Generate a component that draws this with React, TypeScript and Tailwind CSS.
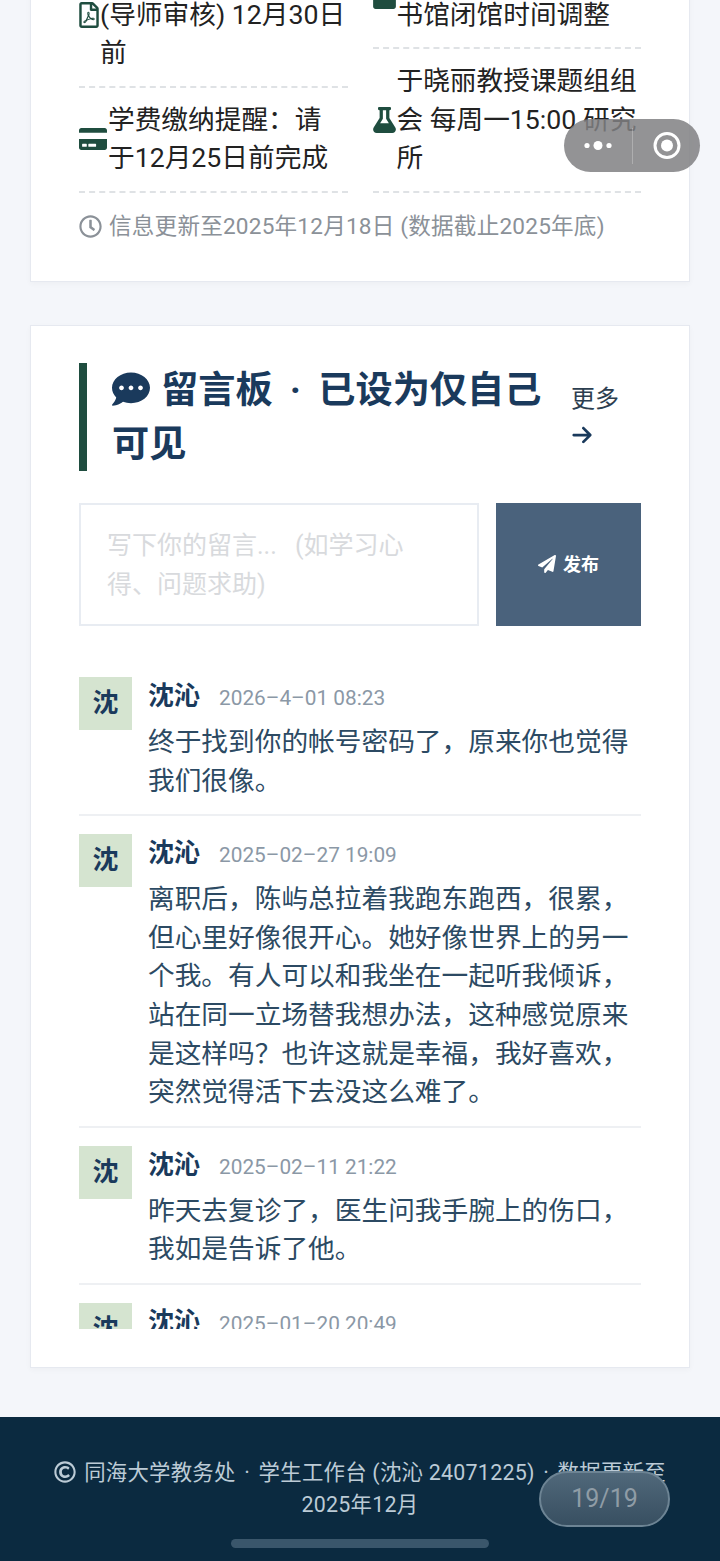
import { FaCalendar, FaCommentDots, FaCreditCard, FaFlask, FaPaperPlane, FaRegClock, FaRegCopyright, FaRegFilePdf } from "react-icons/fa";
import { FaArrowRight } from "react-icons/fa6";

const notices = {
  left: [
    { icon: <FaRegFilePdf className="h-[26px] w-[20px]" />, text: "开题报告提交截止 (导师审核) 12月30日前" },
    { icon: <FaCreditCard className="h-[26px] w-[28px]" />, text: "学费缴纳提醒：请于12月25日前完成" },
  ],
  right: [
    { icon: <FaCalendar className="h-[26px] w-[23px]" />, text: "元旦假期期间学校图书馆闭馆时间调整" },
    { icon: <FaFlask className="h-[26px] w-[23px]" />, text: "于晓丽教授课题组组会 每周一15:00 研究所" },
  ],
};

const messages = [
  { time: "2026–4–01 08:23", text: "终于找到你的帐号密码了，原来你也觉得我们很像。" },
  {
    time: "2025–02–27 19:09",
    text: "离职后，陈屿总拉着我跑东跑西，很累，但心里好像很开心。她好像世界上的另一个我。有人可以和我坐在一起听我倾诉，站在同一立场替我想办法，这种感觉原来是这样吗？也许这就是幸福，我好喜欢，突然觉得活下去没这么难了。",
  },
  { time: "2025–02–11 21:22", text: "昨天去复诊了，医生问我手腕上的伤口，我如是告诉了他。" },
  { time: "2025–01–20 20:49", text: "今天也是普通的一天。" },
];

function NoticeItem({ icon, text }: { icon: React.ReactNode; text: string }) {
  return (
    <div className="flex items-center gap-[1px] border-b-2 border-dashed border-[#dfe2e5] py-[13px]">
      <span className="shrink-0 text-[#1f4d3f]">{icon}</span>
      <span>{text}</span>
    </div>
  );
}

function Message({ time, text }: { time: string; text: string }) {
  return (
    <div className="flex gap-[17px] border-b-2 border-[#eef0f3] pb-[14px] pt-[18px]">
      <div className="flex h-[53px] w-[53px] shrink-0 items-center justify-center bg-[#d5e4d0] text-[26px] font-bold text-[#1a3a5c]">
        沈
      </div>
      <div className="-ml-px min-w-0 flex-1">
        <div className="mb-[8px] flex items-center gap-[19px] leading-[38px]">
          <span className="text-[26px] font-bold text-[#1a3a5c]">沈沁</span>
          <span className="translate-y-[2px] text-[20.8px] text-[#8b98a6]">{time}</span>
        </div>
        <p className="text-[26.7px] leading-[38.6px] text-[#2c4a63]">{text}</p>
      </div>
    </div>
  );
}

export default function App() {
  return (
    <div className="relative h-[1561px] w-[720px] overflow-hidden bg-[#f4f6fa] font-['Roboto','Noto_Sans_CJK_SC',sans-serif]">
      <section className="mx-[30px] -mt-[104px] border border-[#e6e9f0] bg-white px-[48px] pb-[38px] pt-[47px] shadow-[0_2px_6px_rgba(0,0,0,0.03)]">
        <div className="grid grid-cols-2 gap-x-[25px] text-[26.7px] leading-[38.6px] text-[#222]">
          <div className="flex flex-col">
            {notices.left.map((n) => (
              <NoticeItem key={n.text} {...n} />
            ))}
          </div>
          <div className="flex flex-col">
            {notices.right.map((n) => (
              <NoticeItem key={n.text} {...n} />
            ))}
          </div>
        </div>
        <div className="mt-[18px] flex items-center gap-[7px] text-[22.6px] leading-[32px] tracking-[0.2px] text-[#8b9198]">
          <FaRegClock className="shrink-0 text-[23px]" />
          <span>信息更新至2025年12月18日 (数据截止2025年底)</span>
        </div>
      </section>

      <section className="mx-[30px] mt-[43px] border border-[#e6e9f0] bg-white px-[48px] pb-[38px] pt-[37px] shadow-[0_2px_6px_rgba(0,0,0,0.03)]">
        <div className="mb-[32px] flex items-center justify-between gap-[28px]">
          <h2 className="flex-1 border-l-8 border-[#1f4d3f] pl-[25px] text-[37.2px] font-bold leading-[54px] text-[#1a3a5c]">
            <FaCommentDots className="mr-[11px] inline-block align-[-5px] text-[38px]" />
            留言板<span className="mx-[8px]"> · </span>已设为仅自己可见
          </h2>
          <a className="w-[70px] shrink-0 text-[24px] leading-[35px] text-[#2c3e50]">
            更多 <FaArrowRight className="inline-block align-[-4px] text-[22px] text-[#1a3a5c]" />
          </a>
        </div>

        <div className="flex gap-[17px]">
          <textarea
            className="h-[123px] flex-1 resize-none border-2 border-[#e8ecf2] pb-[20px] pl-[26px] pr-[60px] pt-[22px] text-[25px] leading-[38.6px] [word-spacing:12px] placeholder:text-[#d8dadd]"
            placeholder="写下你的留言... (如学习心得、问题求助)"
          />
          <button className="flex w-[145px] items-center justify-center gap-[7px] bg-[#4a627c] text-[18px] font-bold text-white">
            <FaPaperPlane className="text-[18px]" />
            发布
          </button>
        </div>

        <div className="mt-[33px] h-[670px] overflow-hidden">
          {messages.map((m) => (
            <Message key={m.time} {...m} />
          ))}
        </div>
      </section>

      <footer className="mt-[49px] h-[144px] bg-[#0b2a40] px-[40px] pt-[40px] text-center text-[21.4px] leading-[32px] tracking-[0.25px] text-[#bccbd6]">
        <FaRegCopyright className="mr-[8px] inline-block align-[-3px] text-[22px]" />
        同海大学教务处<span className="mx-[3px]"> · </span>学生工作台 (沈沁 24071225)<span className="mx-[3px]"> · </span>数据更新至2025年12月
      </footer>

      {/* capsule */}
      <div className="absolute left-[564px] top-[119px] flex h-[53px] w-[136px] items-center rounded-full bg-[#808083]/85">
        <svg width="68" height="53" viewBox="0 0 68 53" className="shrink-0">
          <circle cx="23" cy="26.5" r="2.6" fill="#fff" />
          <circle cx="34" cy="26.5" r="4.5" fill="#fff" />
          <circle cx="45" cy="26.5" r="2.6" fill="#fff" />
        </svg>
        <div className="h-[36px] w-px bg-white/25" />
        <svg width="67" height="53" viewBox="0 0 67 53" className="shrink-0">
          <circle cx="34" cy="26.5" r="12" fill="none" stroke="#fff" strokeWidth="3" />
          <circle cx="34" cy="26.5" r="6" fill="#fff" />
        </svg>
      </div>

      {/* page pill */}
      <div className="absolute left-[539px] top-[1471px] flex h-[56px] w-[131px] items-center justify-center rounded-full border-2 border-[#6d8494] bg-gradient-to-b from-[#50687a] to-[#384f61] text-[25px] text-[#8f9ca6]">
        19/19
      </div>

      {/* home indicator */}
      <div className="absolute left-[231px] top-[1539px] h-[9px] w-[258px] rounded-full bg-[#3a566b]" />
    </div>
  );
}
